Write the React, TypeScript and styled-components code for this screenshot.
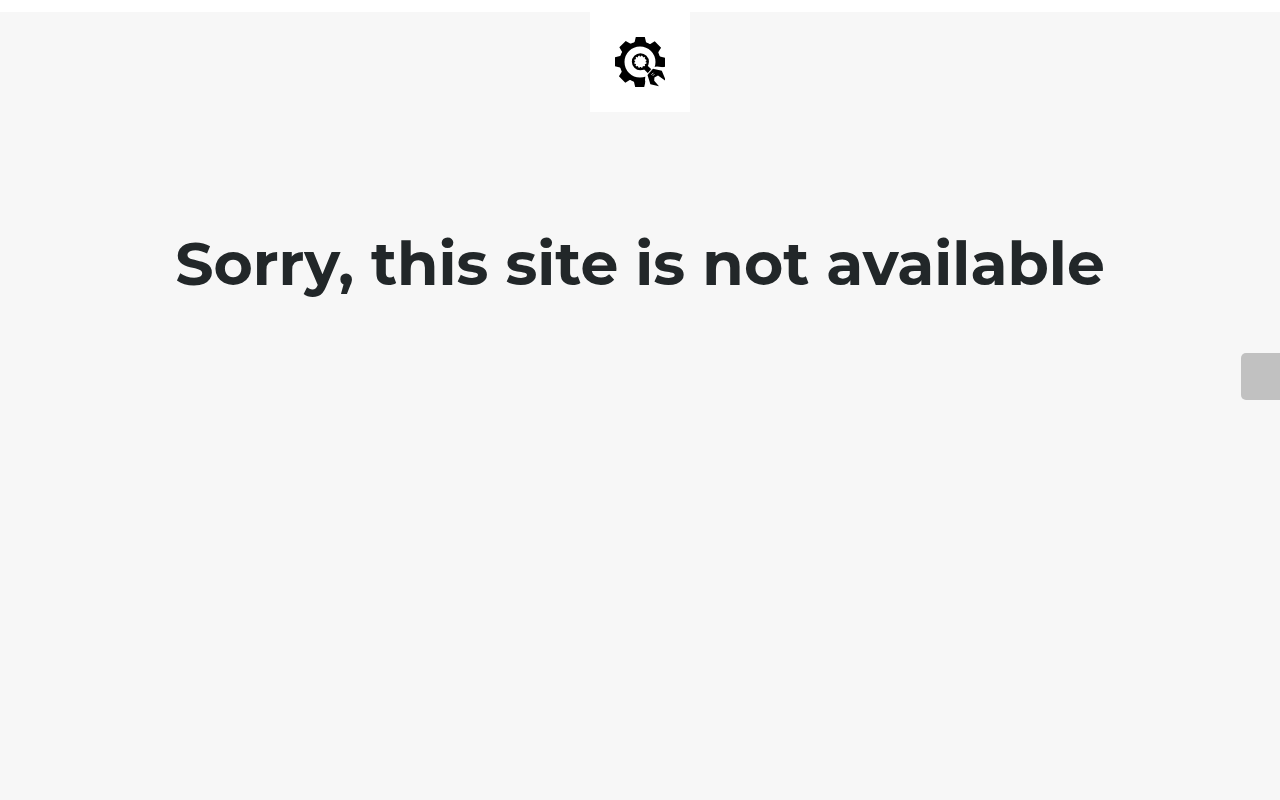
import React from "react";
import styled, { createGlobalStyle } from "styled-components";

const GlobalStyle = createGlobalStyle`
  *, *::before, *::after { box-sizing: border-box; }
  body {
    margin: 0;
    background: #f7f7f7;
    color: #222729;
    font-family: Montserrat, Inter, sans-serif;
    overflow-x: hidden;
  }
`;

const Page = styled.div`
  min-height: 100vh;
  border-top: 12px solid #ffffff;
`;

const Header = styled.header`
  display: flex;
  justify-content: center;
`;

const LogoTile = styled.div`
  display: grid;
  place-items: center;
  width: 100px;
  height: 100px;
  background: #ffffff;
`;

const Logo = styled.svg`
  display: block;
  width: 50px;
  height: 50px;
`;

const Main = styled.main`
  padding: 112px 16px 48px;
  text-align: center;
`;

const Title = styled.h1`
  margin: 0;
  font-size: 60px;
  line-height: 80px;
  font-weight: 700;
`;

const SideTab = styled.button`
  position: fixed;
  top: 353px;
  right: 0;
  width: 39px;
  height: 47px;
  padding: 0;
  border: 0;
  border-radius: 5px 0 0 5px;
  background: #c1c1c1;
  cursor: pointer;
`;

const TEETH = [0, 45, 90, 135, 180, 225, 270, 315];
const NOTCHES = Array.from({ length: 12 }, (_, i) => i * 30);

function GearLogo() {
  return (
    <Logo viewBox="0 0 50 50" role="img" aria-label="Maintenance">
      {TEETH.map((angle) => (
        <path
          key={angle}
          d="M17.5 7.5 L19.6 5 L20.8 0 H29.8 L31 5 L32.5 7.5 Z"
          transform={`rotate(${angle} 25 25)`}
        />
      ))}
      <circle cx="25" cy="25" r="18" fill="none" stroke="#000" strokeWidth="5" />
      <path d="M30.5 37 L35.5 30.5 L42 29.5 L50 30.5 V50 H31 L30 43 Z" fill="#fff" />
      <circle cx="25.4" cy="24.7" r="7.4" fill="none" stroke="#000" strokeWidth="2.3" />
      {NOTCHES.map((angle) => (
        <path
          key={angle}
          d="M24.8 18 H26 V19.4 H24.8 Z"
          transform={`rotate(${angle} 25.4 24.7)`}
        />
      ))}
      <path d="M31.3 27.6 L36.6 32.4 L33.2 36.4 L28.2 31.4 Z" />
      <path d="M31.8 37.6 L37.6 31" fill="none" stroke="#fff" strokeWidth="0.8" />
      <path d="M32.5 38 L38 31.8 L46.8 33.8 L50 41.5 V43.6 L43 38.4 L39.4 40.4 L39.2 43.8 L44 49.2 L35.4 47.2 Z" />
      <path d="M36.4 37.8 L38.4 35.8 M37.8 38.8 L39.4 37.2" fill="none" stroke="#fff" strokeWidth="0.8" />
    </Logo>
  );
}

export default function App() {
  return (
    <>
      <GlobalStyle />
      <Page>
        <Header>
          <LogoTile>
            <GearLogo />
          </LogoTile>
        </Header>
        <Main>
          <Title>Sorry, this site is not available</Title>
        </Main>
        <SideTab type="button" aria-label="Open side panel" />
      </Page>
    </>
  );
}
